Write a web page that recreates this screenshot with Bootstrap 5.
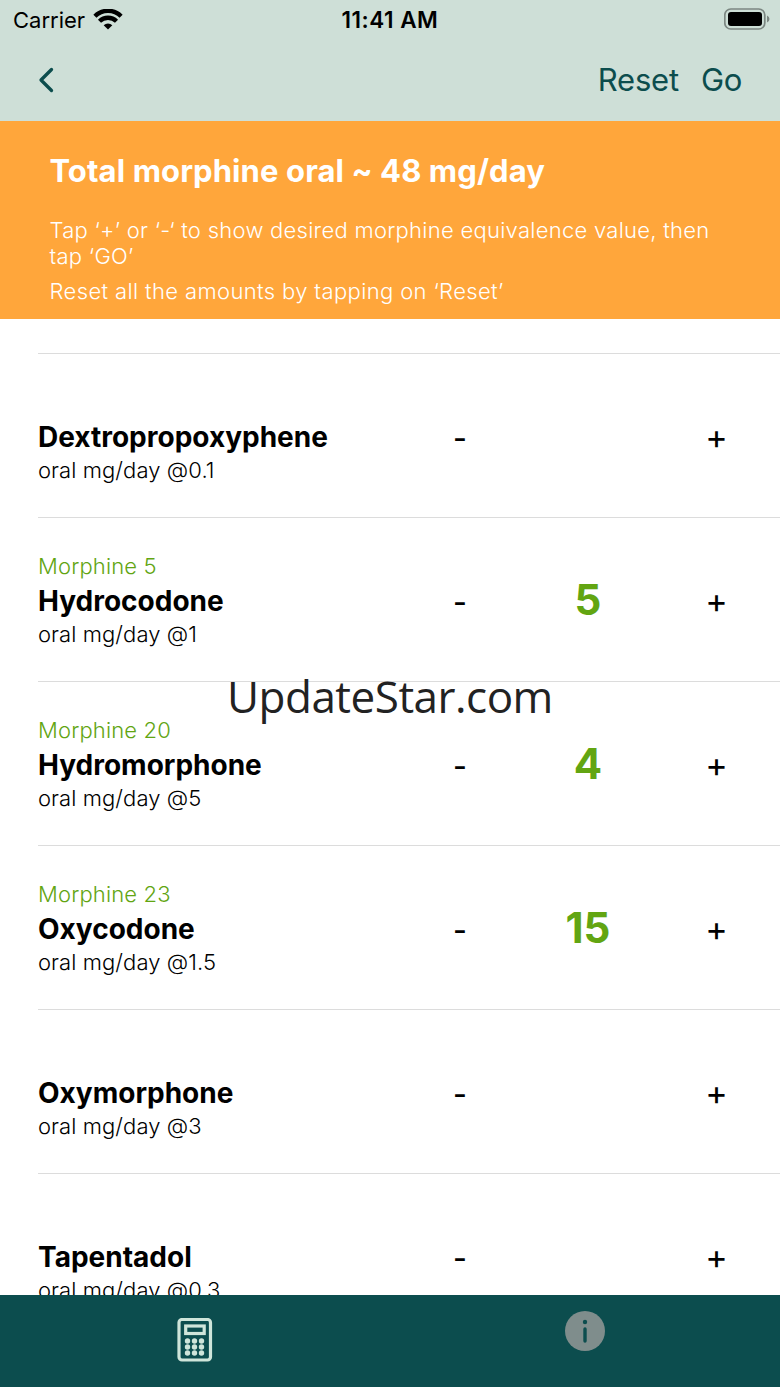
<!DOCTYPE html>
<html lang="en">
<head>
<meta charset="utf-8">
<meta name="viewport" content="width=device-width, initial-scale=1">
<title>Opioid calculator</title>
<link href="https://cdn.jsdelivr.net/npm/bootstrap@5.3.0/dist/css/bootstrap.min.css" rel="stylesheet">
<style>
body{font-family:Inter,"Liberation Sans",sans-serif;width:780px;height:1387px;overflow:hidden;background:#fff;color:#000}
.top-area{height:121px;background:#cedfd7}
.status-row{height:40px;font-size:22px;line-height:40px}
.carrier{padding-left:13px}
.clock{font-weight:600;font-size:22.5px;letter-spacing:.5px}
.nav-row{height:80px;padding:0 38px 0 36px;color:#0c4d4d;font-size:31px;line-height:80px}
.nav-row button{all:unset}
.nav-row .reset-btn{letter-spacing:-.2px;margin-right:22px}
.nav-row .go-btn{letter-spacing:-.3px}
.summary{height:198px;background:#ffa63b;color:#fff;padding:30px 50px 0 49.5px}
.summary h1{font-size:31px;font-weight:700;line-height:40px;margin:0 0 25.5px;letter-spacing:.1px;white-space:nowrap}
.hint{font-size:22px;font-weight:300;line-height:26px;margin:0 0 9px;letter-spacing:.27px;white-space:nowrap}
.hint-reset{letter-spacing:.37px}
.drugs{height:976px;padding-left:38px}
.spacer{height:35px;border-bottom:1px solid #dcdcdc}
.drug{height:164px;border-bottom:1px solid #dcdcdc}
.info{width:396px;white-space:nowrap}
.equiv,.dose{font-size:22px;font-weight:300;line-height:30px;height:30px}
.equiv{color:#62a512;letter-spacing:.15px}
.dose{letter-spacing:.08px}
.drug h2{font-size:28px;font-weight:700;line-height:38px;margin:0;padding-top:1px;margin-bottom:-1px}
.step{width:52px;text-align:center;font-size:30px;font-weight:500;line-height:40px;padding-top:5px}
.plus{font-size:34px;font-weight:400;padding:2px 0 0 1px}
.amount{width:204px;text-align:center;font-size:42px;font-weight:700;color:#62a512;line-height:50px;padding-top:1px}
.tabs{height:92px;background:#0c4d4e}
.tabs>div{width:50%}
.brand-mark{left:227px;top:666px;font-family:"Open Sans","Noto Sans",sans-serif;font-size:44px;letter-spacing:-.5px;line-height:60px;color:#222;white-space:nowrap}
</style>
</head>
<body class="d-flex flex-column position-relative">
<header class="top-area flex-shrink-0">
  <div class="status-row d-flex align-items-center">
    <div class="col-4 d-flex align-items-center"><span class="carrier">Carrier</span>
      <svg class="ms-2" width="30" height="22" viewBox="0 0 30 22" style="margin-top:-1px"><g fill="none" stroke="#000" stroke-width="4.300"><path d="M1.900 7.200a18.500 18.500 0 0 1 26.200 0"/><path d="M6.500 12.300a12 12 0 0 1 17 0"/></g><path d="M15 20.500l-4.300-4.200a6.200 6.200 0 0 1 8.600 0z"/></svg>
    </div>
    <div class="col-4 text-center clock">11:41 AM</div>
    <div class="col-4 d-flex justify-content-end pe-2">
      <svg width="48" height="22" viewBox="0 0 48 22" style="margin-top:-2px"><rect x=".8" y="1" width="40" height="20" rx="6" fill="none" stroke="#7c8782" stroke-width="1.700"/><rect x="4" y="4" width="34" height="14" rx="3"/><path d="M43 7.500q2.500 1 2.500 3.500t-2.500 3.500z" fill="#7c8782"/></svg>
    </div>
  </div>
  <div class="nav-row d-flex align-items-center">
    <svg width="18" height="26" viewBox="0 0 18 26"><path d="M15.500 2.500L5 13l10.500 10.500" fill="none" stroke="#0c4d4d" stroke-width="3.300" stroke-linecap="round" stroke-linejoin="round"/></svg>
    <div class="ms-auto"><button class="reset-btn">Reset</button><button class="go-btn">Go</button></div>
  </div>
</header>
<section class="summary flex-shrink-0">
  <h1>Total morphine oral ~ 48 mg/day</h1>
  <p class="hint">Tap ‘+’ or ‘-‘ to show desired morphine equivalence value, then<br>tap ‘GO’</p>
  <p class="hint hint-reset">Reset all the amounts by tapping on ‘Reset’</p>
</section>
<main class="drugs overflow-hidden flex-shrink-0">
  <div class="spacer"></div>
  <div class="drug d-flex align-items-center"><div class="info"><div class="equiv"></div><h2>Dextropropoxyphene</h2><div class="dose">oral mg/day @0.1</div></div><div class="step">-</div><div class="amount"></div><div class="step plus">+</div></div>
  <div class="drug d-flex align-items-center"><div class="info"><div class="equiv">Morphine 5</div><h2>Hydrocodone</h2><div class="dose">oral mg/day @1</div></div><div class="step">-</div><div class="amount">5</div><div class="step plus">+</div></div>
  <div class="drug d-flex align-items-center"><div class="info"><div class="equiv">Morphine 20</div><h2>Hydromorphone</h2><div class="dose">oral mg/day @5</div></div><div class="step">-</div><div class="amount">4</div><div class="step plus">+</div></div>
  <div class="drug d-flex align-items-center"><div class="info"><div class="equiv">Morphine 23</div><h2>Oxycodone</h2><div class="dose">oral mg/day @1.5</div></div><div class="step">-</div><div class="amount">15</div><div class="step plus">+</div></div>
  <div class="drug d-flex align-items-center"><div class="info"><div class="equiv"></div><h2>Oxymorphone</h2><div class="dose">oral mg/day @3</div></div><div class="step">-</div><div class="amount"></div><div class="step plus">+</div></div>
  <div class="drug d-flex align-items-center"><div class="info"><div class="equiv"></div><h2>Tapentadol</h2><div class="dose">oral mg/day @0.3</div></div><div class="step">-</div><div class="amount"></div><div class="step plus">+</div></div>
</main>
<nav class="tabs d-flex flex-shrink-0">
  <div class="d-flex justify-content-center pt-4"><svg width="36" height="44" viewBox="0 0 36 44" style="margin-top:-1px"><rect x="2" y="1.500" width="31.500" height="40.500" rx="3" fill="none" stroke="#cfe5da" stroke-width="3.200"/><rect x="8.700" y="8" width="18.500" height="7.500" fill="none" stroke="#cfe5da" stroke-width="3.200"/><g fill="#cfe5da"><circle cx="10.500" cy="23" r="2.700"/><circle cx="17.500" cy="23" r="2.700"/><circle cx="24.500" cy="23" r="2.700"/><circle cx="10.500" cy="29" r="2.700"/><circle cx="17.500" cy="29" r="2.700"/><circle cx="24.500" cy="29" r="2.700"/><circle cx="10.500" cy="35" r="2.700"/><circle cx="17.500" cy="35" r="2.700"/><circle cx="24.500" cy="35" r="2.700"/></g></svg></div>
  <div class="d-flex justify-content-center pt-3"><svg width="40" height="40" viewBox="0 0 40 40" style="margin-top:-.5px"><circle cx="20" cy="20" r="20" fill="#7f8d8c"/><circle cx="20" cy="11" r="2.200" fill="#0c4d4e"/><path d="M20 18v12" stroke="#0c4d4e" stroke-width="3.400" stroke-linecap="round"/></svg></div>
</nav>
<div class="brand-mark position-absolute">UpdateStar.com</div>
<script src="https://cdn.jsdelivr.net/npm/bootstrap@5.3.0/dist/js/bootstrap.bundle.min.js"></script>
</body>
</html>
